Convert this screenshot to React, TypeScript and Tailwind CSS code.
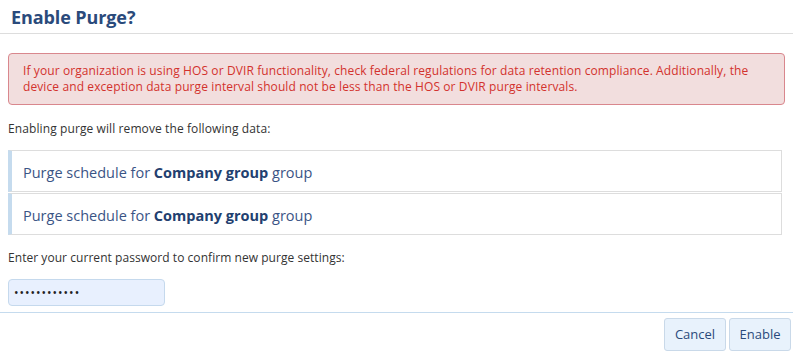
import React from "react";

export default function App() {
  const font = { fontFamily: '"Open Sans", "Noto Sans", sans-serif' };
  return (
    <div className="w-[793px] h-[353px] bg-white flex flex-col overflow-hidden" style={font}>
      <div className="h-[34px] border-b border-[#dddddd] px-[11px] flex items-center">
        <h1 className="text-[18px] font-bold text-[#2a4a7b] leading-none tracking-[-0.1px]">Enable Purge?</h1>
      </div>
      <div className="px-[8px] flex flex-col">
        <div className="mt-[19px] h-[52px] rounded-[4px] border border-[#d9878d] bg-[#f2dede] px-[14px] flex flex-col justify-center text-[12px] leading-[16px] text-[#d2322d] tracking-[0.1px]">
          <span className="whitespace-nowrap">If your organization is using HOS or DVIR functionality, check federal regulations for data retention compliance. Additionally, the</span>
          <span className="whitespace-nowrap">device and exception data purge interval should not be less than the HOS or DVIR purge intervals.</span>
        </div>
        <div className="mt-[16px] text-[12px] leading-[16px] text-[#333333] tracking-[0.1px]">Enabling purge will remove the following data:</div>
        <div className="mt-[13px] w-[774px] flex flex-col gap-[1px]">
          {[0, 1].map((i) => (
            <div
              key={i}
              className="h-[42px] border border-[#dddddd] border-l-[4px] border-l-[#c5dbee] pl-[11px] pt-[3px] flex items-center text-[14.5px] text-[#3a5485]"
            >
              Purge schedule for&nbsp;<b className="font-bold text-[#22406f]">Company group</b>&nbsp;group
            </div>
          ))}
        </div>
        <div className="mt-[15px] text-[12px] leading-[16px] text-[#333333] tracking-[0.05px]">Enter your current password to confirm new purge settings:</div>
        <input
          type="password"
          defaultValue="............"
          className="mt-[13px] w-[157px] h-[27px] rounded-[4px] border border-[#c5d9ed] bg-[#e8f0fe] px-[5px] text-[12px] tracking-[1px] text-[#222] outline-none"
        />
      </div>
      <div className="mt-[6px] border-t border-[#c5dbee] flex justify-end gap-[3px] pr-[2px] pt-[5px]">
        <button className="w-[62px] h-[33px] rounded-[3px] border border-[#c9d9e9] bg-[#e8f2fc] text-[13px] text-[#2a4a7b]">Cancel</button>
        <button className="w-[62px] h-[33px] rounded-[3px] border border-[#c9d9e9] bg-[#e8f2fc] text-[13px] text-[#2a4a7b]">Enable</button>
      </div>
    </div>
  );
}
